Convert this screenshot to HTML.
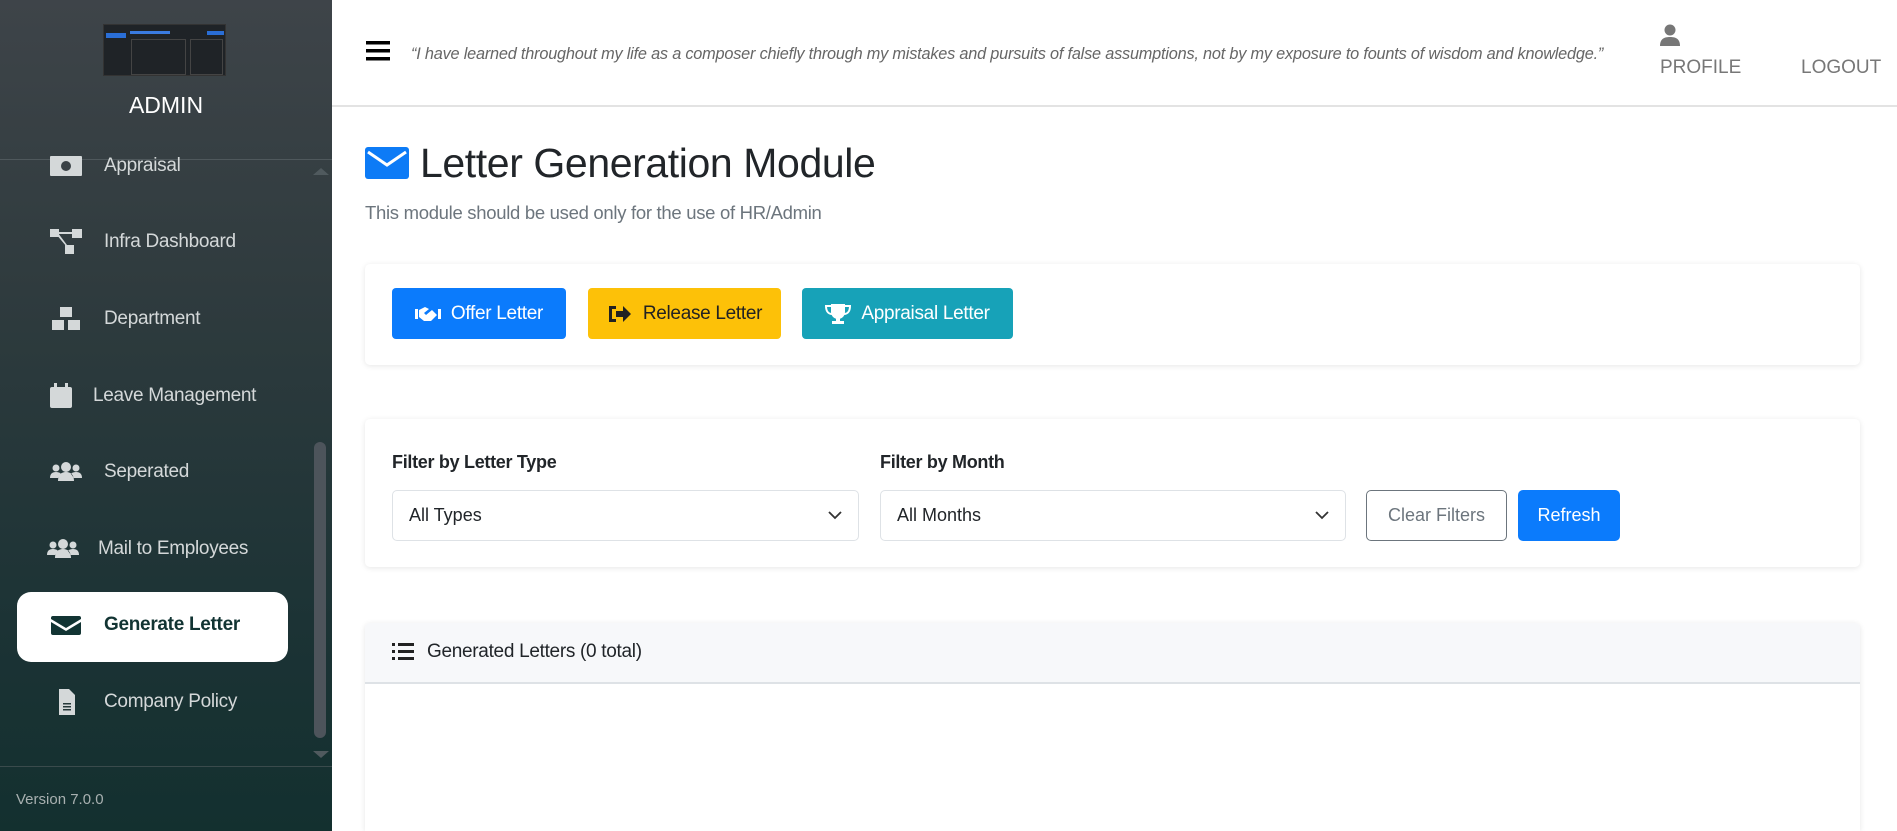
<!DOCTYPE html>
<html><head><meta charset="utf-8"><style>
*{box-sizing:border-box;margin:0;padding:0}
html{width:1897px;height:831px;overflow:hidden}
body{width:1897px;height:831px;overflow:hidden;font-family:"Liberation Sans",sans-serif;background:#fff;position:relative;color:#212529}
.sb{position:absolute;left:0;top:0;width:332px;height:831px;background:linear-gradient(180deg,#3e4449 0%,#2f3b3e 35%,#1c3335 75%,#13302f 100%)}
.logo{position:absolute;left:103px;top:24px;width:123px;height:52px;background:#1f2327;border:1px solid #333}
.admin{position:absolute;left:0;width:332px;top:92px;text-align:center;color:#fff;font-size:23px}
.hr1{position:absolute;left:0;top:159px;width:332px;height:1px;background:#4f585c}
.mi{position:absolute;left:50px;color:#d4d8d9;font-size:19px;letter-spacing:-0.3px;display:flex;align-items:center}
.mi svg{width:32px;height:26px;margin-right:22px;fill:#d4d8d9}
.act{position:absolute;left:17px;top:592px;width:271px;height:70px;background:#fff;border-radius:14px}
.sc{position:absolute;left:314px;top:442px;width:12px;height:296px;background:#4d545b;border-radius:6px}
.hr2{position:absolute;left:0;top:766px;width:332px;height:1px;background:#3a4b4c}
.ver{position:absolute;left:16px;top:791px;color:#a8b0b0;font-size:15px}
.hdr{position:absolute;left:332px;top:0;right:0;height:107px;border-bottom:2px solid #e3e3e3}
.q{position:absolute;left:411px;top:45px;width:1208px;font-style:italic;color:#666;font-size:16.3px;white-space:nowrap;overflow:hidden;text-overflow:ellipsis;letter-spacing:-0.2px}
.nav{position:absolute;top:57px;color:#777;font-size:19px}
.card{position:absolute;left:365px;width:1495px;background:#fff;border-radius:5px;box-shadow:0 1px 6px rgba(0,0,0,.1)}
.btn{position:absolute;top:288px;height:51px;border-radius:4px;color:#fff;font-size:19px;display:flex;align-items:center;justify-content:center;letter-spacing:-0.3px}
.btn svg{width:26px;height:22px;margin-right:10px}
.lbl{position:absolute;top:452px;font-weight:bold;font-size:18px;letter-spacing:-0.3px}
.sel{position:absolute;top:490px;height:51px;border:1px solid #dee2e6;border-radius:5px;font-size:18px;padding:0 16px;display:flex;align-items:center;justify-content:space-between}
</style></head><body>
<div class="sb">
<div class="logo"><div style="position:absolute;left:2px;top:8px;width:20px;height:5px;background:#2a6ed6"></div><div style="position:absolute;left:26px;top:6px;width:40px;height:3px;background:#3a7be0"></div><div style="position:absolute;left:27px;top:14px;width:55px;height:36px;border:1px solid #444"></div><div style="position:absolute;left:86px;top:14px;width:33px;height:36px;border:1px solid #444"></div><div style="position:absolute;left:103px;top:6px;width:17px;height:4px;background:#2a6ed6"></div></div>
<div class="admin">ADMIN</div>
<div class="hr1"></div>
<div style="position:absolute;left:313px;top:168px;width:0;height:0;border-left:8px solid transparent;border-right:8px solid transparent;border-bottom:7px solid #505a5e"></div>
<div class="mi" style="top:153px"><svg viewBox="0 0 32 26"><rect x="0" y="3" width="32" height="20" rx="1"/><circle cx="16" cy="13" r="5" fill="#3a4246"/></svg>Appraisal</div>
<div class="mi" style="top:229px"><svg viewBox="0 0 32 26"><rect x="0" y="0" width="9" height="8"/><rect x="22" y="0" width="10" height="9"/><rect x="15" y="16" width="9" height="9"/><path d="M9 3h13v2H9zM6 5l10 12 1-1L8 4z"/></svg>Infra Dashboard</div>
<div class="mi" style="top:306px"><svg viewBox="0 0 32 26"><rect x="10" y="1" width="12" height="10"/><rect x="2" y="14" width="12" height="10"/><rect x="18" y="14" width="12" height="10"/></svg>Department</div>
<div class="mi" style="top:383px;left:47px"><svg viewBox="0 0 32 26" style="margin-right:14px"><rect x="3" y="4" width="22" height="21" rx="2"/><rect x="7" y="0" width="3" height="6"/><rect x="18" y="0" width="3" height="6"/></svg>Leave Management</div>
<div class="mi" style="top:459px"><svg viewBox="0 0 32 26"><circle cx="16" cy="8" r="5"/><circle cx="6" cy="9" r="3.5"/><circle cx="26" cy="9" r="3.5"/><path d="M8 22c0-6 3-9 8-9s8 3 8 9z M0 19c0-4 2-6 6-6s5 2 5 2l-3 4z M32 19c0-4-2-6-6-6s-5 2-5 2l3 4z"/></svg>Seperated</div>
<div class="mi" style="top:536px;left:47px"><svg viewBox="0 0 32 26" style="margin-right:19px"><circle cx="16" cy="8" r="5"/><circle cx="6" cy="9" r="3.5"/><circle cx="26" cy="9" r="3.5"/><path d="M8 22c0-6 3-9 8-9s8 3 8 9z M0 19c0-4 2-6 6-6s5 2 5 2l-3 4z M32 19c0-4-2-6-6-6s-5 2-5 2l3 4z"/></svg>Mail to Employees</div>
<div class="act"></div>
<div class="mi" style="top:612px;color:#123433;font-weight:bold"><svg viewBox="0 0 32 26" style="fill:#123433"><path d="M3 4h26a2 2 0 0 1 2 2v1L16 16 1 7V6a2 2 0 0 1 2-2z M1 10l15 9 15-9v11a2 2 0 0 1-2 2H3a2 2 0 0 1-2-2z"/></svg>Generate Letter</div>
<div class="mi" style="top:689px"><svg viewBox="0 0 32 26"><path d="M9 0h10l6 6v20H9z" /><path d="M13 14h8v1.5h-8zM13 17h8v1.5h-8zM13 20h8v1.5h-8z" fill="#26393a"/></svg>Company Policy</div>
<div class="sc"></div>
<div style="position:absolute;left:313px;top:751px;width:0;height:0;border-left:8px solid transparent;border-right:8px solid transparent;border-top:7px solid #505a5e"></div>
<div class="hr2"></div>
<div class="ver">Version 7.0.0</div>
</div>
<div class="hdr"></div>
<svg style="position:absolute;left:366px;top:41px" width="24" height="20"><rect y="0" width="24" height="3.5"/><rect y="8" width="24" height="3.5"/><rect y="16" width="24" height="3.5"/></svg>
<div class="q">“I have learned throughout my life as a composer chiefly through my mistakes and pursuits of false assumptions, not by my exposure to founts of wisdom and knowledge.”</div>
<svg style="position:absolute;left:1659px;top:24px" width="22" height="22" viewBox="0 0 22 22" fill="#777"><circle cx="11" cy="6" r="5.5"/><path d="M1 22c0-7 4-9 10-9s10 2 10 9z"/></svg>
<div class="nav" style="left:1660px">PROFILE</div>
<div class="nav" style="left:1801px">LOGOUT</div>
<svg style="position:absolute;left:365px;top:147px" width="44" height="32" viewBox="0 0 44 32"><rect width="44" height="32" rx="3" fill="#0d7bf6"/><path d="M3 5l19 13L41 5" stroke="#fff" stroke-width="3" fill="none"/></svg>
<div style="position:absolute;left:420px;top:140px;font-size:41px;letter-spacing:-0.4px;color:#212529">Letter Generation Module</div>
<div style="position:absolute;left:365px;top:202px;font-size:18.5px;color:#6c757d;letter-spacing:-0.3px">This module should be used only for the use of HR/Admin</div>
<div class="card" style="top:264px;height:101px"></div>
<div class="btn" style="left:392px;width:174px;background:#0b7bfc"><svg viewBox="0 0 26 22" fill="#fff"><rect x="0" y="6" width="3" height="10"/><rect x="23" y="6" width="3" height="10"/><path d="M4 7l6-3 4 2-5 4 2 2 6-5 5 5-6 6H9L4 14z"/></svg>Offer Letter</div>
<div class="btn" style="left:588px;width:193px;background:#fdc108;color:#222"><svg viewBox="0 0 26 22" fill="#222"><path d="M2 3h7v3H5v10h4v3H2z"/><path d="M9 8h7V3l8 8-8 8v-5H9z"/></svg>Release Letter</div>
<div class="btn" style="left:802px;width:211px;background:#17a2b8"><svg viewBox="0 0 26 22" fill="#fff"><path d="M6 1h14v8a7 7 0 0 1-14 0z"/><path d="M6 3H1c0 6 3 8 6 8M20 3h5c0 6-3 8-6 8" stroke="#fff" stroke-width="2" fill="none"/><rect x="11" y="14" width="4" height="4"/><rect x="7" y="18" width="12" height="3"/></svg>Appraisal Letter</div>
<div class="card" style="top:419px;height:148px"></div>
<div class="lbl" style="left:392px">Filter by Letter Type</div>
<div class="lbl" style="left:880px">Filter by Month</div>
<div class="sel" style="left:392px;width:467px">All Types<svg width="14" height="9" viewBox="0 0 14 9"><path d="M1 1l6 6 6-6" stroke="#333" stroke-width="1.8" fill="none"/></svg></div>
<div class="sel" style="left:880px;width:466px">All Months<svg width="14" height="9" viewBox="0 0 14 9"><path d="M1 1l6 6 6-6" stroke="#333" stroke-width="1.8" fill="none"/></svg></div>
<div class="sel" style="left:1366px;width:141px;border-color:#6c757d;color:#6c757d;justify-content:center;padding:0">Clear Filters</div>
<div class="sel" style="left:1518px;width:102px;background:#0b7bfc;border-color:#0b7bfc;color:#fff;justify-content:center;padding:0">Refresh</div>
<div class="card" style="top:623px;height:208px;overflow:hidden;border-radius:5px 5px 0 0"><div style="height:61px;background:#f7f8fa;border-bottom:2px solid #dee2e6"></div></div>
<svg style="position:absolute;left:392px;top:643px" width="22" height="18" viewBox="0 0 22 18" fill="#222"><rect x="0" y="0" width="3" height="3"/><rect x="0" y="7" width="3" height="3"/><rect x="0" y="14" width="3" height="3"/><rect x="6" y="0" width="16" height="3"/><rect x="6" y="7" width="16" height="3"/><rect x="6" y="14" width="16" height="3"/></svg>
<div style="position:absolute;left:427px;top:641px;font-size:19px;letter-spacing:-0.3px">Generated Letters (0 total)</div>
</body></html>
